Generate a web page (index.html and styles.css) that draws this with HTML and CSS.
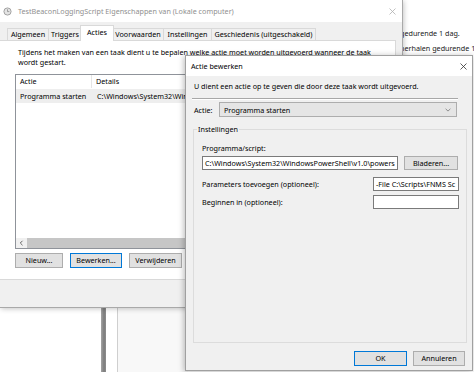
FILE: index.html
```html
<!DOCTYPE html>
<html lang="nl">
<head>
<meta charset="utf-8">
<title>Actie bewerken</title>
<link rel="stylesheet" href="styles.css">
</head>
<body>
<div class="desk">
  <div class="bgline bg1">gedurende 1 dag.</div>
  <div class="bgline bg2">herhalen gedurende 1</div>
  <div class="bgbar"></div>
  <div class="bgthin"></div>
  <div class="bgpane"></div>

  <div class="win win1">
    <div class="titlebar inactive">
      <svg class="ticon" width="9" height="9" viewBox="0 0 9 9"><circle cx="4.5" cy="4.5" r="3.6" fill="#e4e4e4" stroke="#9a9a9a" stroke-width="0.9"/><path d="M4.5 2.3V4.6H6.3" fill="none" stroke="#8a8a8a" stroke-width="0.8"/></svg>
      <span class="ttext">TestBeaconLoggingScript Eigenschappen van (Lokale computer)</span>
      <svg class="close" width="7" height="7" viewBox="0 0 7 7"><path d="M0.5 0.5L6.5 6.5M6.5 0.5L0.5 6.5" stroke="#b0b0b0" stroke-width="0.8"/></svg>
    </div>
    <div class="wbody">
      <div class="tabs">
        <div class="tab t1">Algemeen</div>
        <div class="tab t2">Triggers</div>
        <div class="tab t3 sel">Acties</div>
        <div class="tab t4">Voorwaarden</div>
        <div class="tab t5">Instellingen</div>
        <div class="tab t6">Geschiedenis (uitgeschakeld)</div>
      </div>
      <div class="panel">
        <p class="desc">Tijdens het maken van een taak dient u te bepalen welke actie moet worden uitgevoerd wanneer de taak<br>wordt gestart.</p>
        <div class="list">
          <div class="lhead"><div class="c1">Actie</div><div class="c2">Details</div></div>
          <div class="lrow"><div class="c1">Programma starten</div><div class="c2">C:\Windows\System32\WindowsPowerShell\v1.0\powershell.exe</div></div>
          <div class="lfill"></div>
          <div class="hscroll">
            <div class="sarrow"><svg width="5" height="6" viewBox="0 0 5 6"><path d="M3.5 0.8L1.3 3L3.5 5.2" fill="none" stroke="#555" stroke-width="0.9"/></svg></div>
            <div class="thumb"></div>
          </div>
        </div>
        <div class="btnrow">
          <div class="btn b-nieuw">Nieuw...</div>
          <div class="btn b-bew focus">Bewerken...</div>
          <div class="btn b-verw">Verwijderen</div>
        </div>
      </div>
    </div>
  </div>

  <div class="win win2">
    <div class="titlebar">
      <span class="ttext2">Actie bewerken</span>
      <svg class="close2" width="7" height="7" viewBox="0 0 7 7"><path d="M0.5 0.5L6.5 6.5M6.5 0.5L0.5 6.5" stroke="#333" stroke-width="0.8"/></svg>
    </div>
    <div class="wbody2">
      <p class="intro">U dient een actie op te geven die door deze taak wordt uitgevoerd.</p>
      <div class="sep"></div>
      <div class="actrow">
        <span class="actlabel">Actie:</span>
        <div class="combo"><span>Programma starten</span>
          <svg class="chev" width="6" height="4" viewBox="0 0 6 4"><path d="M0.6 0.8L3 3.1L5.4 0.8" fill="none" stroke="#777" stroke-width="0.8"/></svg>
        </div>
      </div>
      <div class="group">
        <span class="glabel">Instellingen</span>
        <div class="flabel">Programma/script:</div>
        <div class="progrow">
          <div class="input prog">C:\Windows\System32\WindowsPowerShell\v1.0\powers</div>
          <div class="btn b-blad">Bladeren...</div>
        </div>
        <div class="frow r1">
          <span class="flabel2">Parameters toevoegen (optioneel):</span>
          <div class="input small">-File C:\Scripts\FNMS Sc</div>
        </div>
        <div class="frow r2">
          <span class="flabel2">Beginnen in (optioneel):</span>
          <div class="input small"></div>
        </div>
      </div>
      <div class="okrow">
        <div class="btn b-ok focus">OK</div>
        <div class="btn b-ann">Annuleren</div>
      </div>
    </div>
  </div>
</div>
</body>
</html>
```

FILE: styles.css
```css
* { box-sizing: border-box; }
html, body { margin: 0; padding: 0; }
body {
  width: 474px;
  height: 372px;
  overflow: hidden;
  background: #ffffff;
  font-family: "Noto Sans", "Open Sans", sans-serif;
  font-size: 7.2px;
  line-height: 10px;
  color: #000;
}
p { margin: 0; }
.desk { position: relative; width: 474px; height: 372px; overflow: hidden; }

/* background window pieces */
.bgline { position: absolute; left: 400px; white-space: nowrap; color: #1a1a1a; }
.bg1 { top: 28px; }
.bg2 { top: 43px; }
.bgbar { position: absolute; left: 101px; top: 300px; width: 5px; height: 80px; background: linear-gradient(90deg, #a4a4a4, #7c7c7c 60%, #8e8e8e); }
.bgthin { position: absolute; left: 117px; top: 300px; width: 1px; height: 80px; background: #cfcfcf; }
.bgpane { position: absolute; left: 118px; top: 300px; width: 70px; height: 80px; background: #f8f8f8; }

/* windows */
.win { position: absolute; display: flex; flex-direction: column; background: #f0f0f0; }
.win1 { left: 0; top: 0; width: 403px; height: 308px; border: 1px solid #a9a9a9; border-left: 0; border-top: 0; box-shadow: 1px 1px 5px rgba(0,0,0,0.22); }
.win2 { left: 185px; top: 55px; width: 288px; height: 316px; border: 1px solid #a0a0a0; box-shadow: -1px 1px 6px rgba(0,0,0,0.28); }

.titlebar { display: flex; align-items: center; background: #fff; flex: none; }
.win1 .titlebar { height: 22px; }
.ticon { margin-left: 3px; margin-right: 6px; flex: none; }
.ttext { color: #8f8f8f; white-space: nowrap; }
.close { margin-left: auto; margin-right: 6px; }
.win2 .titlebar { height: 20px; }
.ttext2 { margin-left: 5px; }
.close2 { margin-left: auto; margin-right: 5px; }

.wbody { flex: 1; display: flex; flex-direction: column; padding-top: 3px; }
.tabs { display: flex; align-items: flex-end; height: 15px; padding-left: 7px; position: relative; z-index: 1; }
.tab { height: 12px; line-height: 11px; border: 1px solid #d9d9d9; border-bottom: 0; background: #f0f0f0; text-align: center; white-space: nowrap; margin-left: -1px; }
.tab.sel { height: 16px; margin-bottom: -1px; background: #fff; line-height: 13px; margin-left: -2px; margin-right: -1px; position: relative; }
.t1 { width: 42px; margin-left: 0; }
.t2 { width: 34px; }
.t3 { width: 34px; }
.t4 { width: 52px; }
.t5 { width: 49px; }
.t6 { width: 105px; }

.panel { width: 396px; height: 240px; background: #fff; border: 1px solid #d9d9d9; border-left: 0; padding: 6px 0 0 15px; display: flex; flex-direction: column; }
.desc { margin-left: 3px; white-space: nowrap; }
.list { margin-top: 7px; width: 366px; height: 175px; border: 1px solid #8f939a; display: flex; flex-direction: column; }
.lhead, .lrow { display: flex; flex: none; white-space: nowrap; }
.lhead { height: 13px; line-height: 13px; }
.lrow { height: 14px; line-height: 14px; background: #eeeeee; margin-top: 1px; }
.c1 { width: 76px; padding-left: 4px; flex: none; }
.lhead .c1 { border-right: 1px solid #e5e5e5; }
.c2 { padding-left: 4px; }
.lrow .c2 { padding-left: 5px; }
.lfill { flex: 1; }
.hscroll { height: 10px; display: flex; flex: none; background: #f0f0f0; }
.sarrow { width: 11px; display: flex; align-items: center; justify-content: center; }
.thumb { flex: 1; background: #c6c6c6; }

.btn { height: 15px; line-height: 13px; border: 1px solid #adadad; background: #e1e1e1; text-align: center; white-space: nowrap; flex: none; }
.btn.focus { border-color: #0078d7; }
.btnrow { display: flex; gap: 7px; margin-top: 4px; }
.b-nieuw { width: 48px; }
.b-bew { width: 52px; }
.b-verw { width: 53px; }

/* second dialog body */
.wbody2 { flex: 1; display: flex; flex-direction: column; padding-top: 5px; }
.intro { margin-left: 8px; white-space: nowrap; }
.sep { margin: 7px 14px 0 6px; height: 2px; border-top: 1px solid #a8a8a8; border-bottom: 1px solid #fff; }
.actrow { display: flex; align-items: center; margin-top: 2px; padding-left: 8px; }
.actlabel { width: 25px; }
.combo { width: 238px; height: 15px; border: 1px solid #adadad; background: #e5e5e5; display: flex; align-items: center; padding-left: 4px; white-space: nowrap; }
.chev { margin-left: auto; margin-right: 5px; }

.group { position: relative; margin: 12px 5px 0 7px; height: 214px; border: 1px solid #dcdcdc; padding: 9px 0 0 8px; }
.glabel { position: absolute; left: 3px; top: -6px; background: #f0f0f0; padding: 0 1px; }
.flabel { height: 10px; margin-top: 4px; }
.progrow { display: flex; gap: 6px; margin-top: 3px; }
.input { height: 14px; border: 1px solid #7a7a7a; background: #fff; line-height: 12px; padding-left: 2px; white-space: nowrap; overflow: hidden; }
.prog { width: 196px; }
.b-blad { width: 54px; height: 14px; line-height: 12px; }
.frow { display: flex; align-items: center; width: 257px; justify-content: space-between; }
.r1 { margin-top: 7px; }
.r2 { margin-top: 4px; }
.small { width: 86px; height: 14px; }

.okrow { display: flex; justify-content: flex-end; gap: 6px; margin: 8px 7px 0 0; }
.b-ok { width: 53px; }
.b-ann { width: 52px; }
```
